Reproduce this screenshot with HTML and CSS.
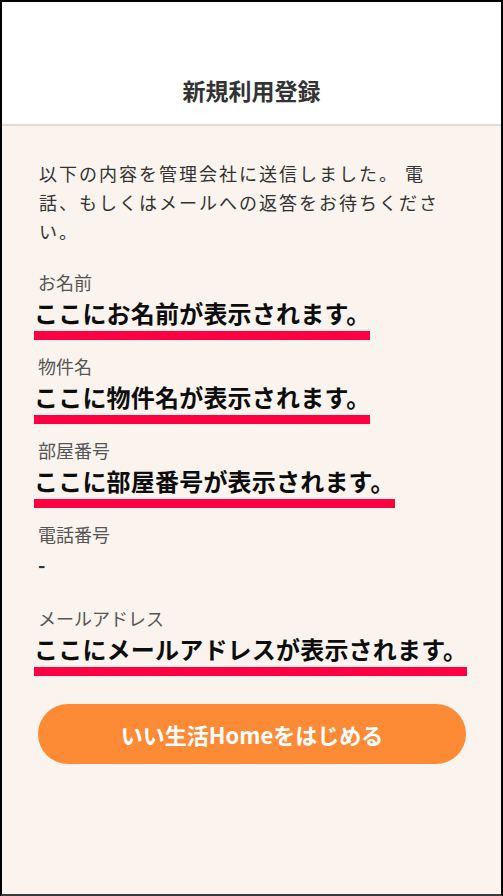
FILE: index.html
```html
<!DOCTYPE html>
<html lang="ja">
<head>
<meta charset="utf-8">
<title>新規利用登録</title>
<link rel="stylesheet" href="styles.css">
</head>
<body>
<div class="frame">
  <header class="header">
    <h1 class="title">新規利用登録</h1>
  </header>
  <main class="content">
    <p class="lead">以下の内容を管理会社に送信しました。 電話、もしくはメールへの返答をお待ちください。</p>
    <dl class="fields">
      <div class="field">
        <dt class="label">お名前</dt>
        <dd class="value"><span class="mark">ここにお名前が表示されます。</span></dd>
      </div>
      <div class="field">
        <dt class="label">物件名</dt>
        <dd class="value"><span class="mark">ここに物件名が表示されます。</span></dd>
      </div>
      <div class="field">
        <dt class="label">部屋番号</dt>
        <dd class="value"><span class="mark">ここに部屋番号が表示されます。</span></dd>
      </div>
      <div class="field">
        <dt class="label">電話番号</dt>
        <dd class="value"><span class="mark mark-empty">-</span></dd>
      </div>
      <div class="field">
        <dt class="label">メールアドレス</dt>
        <dd class="value"><span class="mark">ここにメールアドレスが表示されます。</span></dd>
      </div>
    </dl>
    <button class="start" type="button">いい生活Homeをはじめる</button>
  </main>
</div>
</body>
</html>
```
FILE: styles.css
```css
html, body {
  margin: 0;
  padding: 0;
}

body {
  font-family: "Noto Sans CJK JP", "Noto Sans", sans-serif;
  background: #ffffff;
}

.frame {
  box-sizing: border-box;
  width: 503px;
  height: 896px;
  border: 2px solid #000000;
  border-bottom-color: #3a3a3a;
  background: #faf3ee;
  display: flex;
  flex-direction: column;
}

.header {
  box-sizing: border-box;
  height: 124px;
  flex: none;
  background: #ffffff;
  border-bottom: 2px solid #dcdcdc;
  display: flex;
  align-items: flex-end;
  justify-content: center;
  padding-bottom: 18px;
}

.title {
  margin: 0;
  font-size: 23px;
  line-height: 32px;
  font-weight: 700;
  color: #333333;
}

.content {
  flex: 1;
  padding: 33px 35px 0 36px;
}

.lead {
  margin: 0;
  max-width: 404px;
  padding-left: 1px;
  font-size: 18px;
  line-height: 28.8px;
  letter-spacing: 2px;
  color: #333333;
}

.fields {
  margin: 24px 0 0;
  padding: 0;
}

.field {
  margin-bottom: 13px;
}

.label {
  font-size: 18px;
  line-height: 26px;
  color: #555555;
}

.value {
  margin: 0 0 0 -4px;
}

.mark {
  display: inline-block;
  white-space: nowrap;
  font-size: 24px;
  line-height: 36px;
  font-weight: 700;
  color: #0d0d0d;
  letter-spacing: 0.2px;
  border-bottom: 9px solid #ff0041;
}

.mark-empty {
  font-size: 20px;
  color: #333333;
  padding-left: 4px;
  border-bottom-color: transparent;
}

.start {
  display: block;
  width: 100%;
  height: 60px;
  margin-top: 28px;
  border: none;
  border-radius: 30px;
  background: #fd8a34;
  color: #ffffff;
  font-family: "Noto Sans CJK JP", "Noto Sans", sans-serif;
  font-size: 22px;
  font-weight: 700;
  line-height: 60px;
  padding: 0;
}
```
